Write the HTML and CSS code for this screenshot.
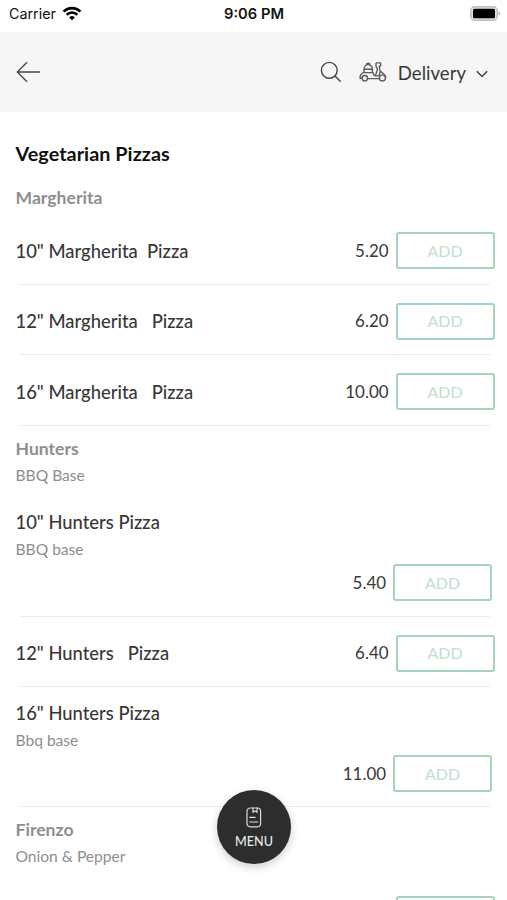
FILE: index.html
```html
<!DOCTYPE html>
<html lang="en">
<head>
<meta charset="utf-8">
<title>Vegetarian Pizzas</title>
<link rel="stylesheet" href="styles.css">
</head>
<body>
<div class="status">
  <div class="carrier"><span>Carrier</span>
    <svg width="20" height="15" viewBox="0 0 20 15" fill="none" stroke="#000" stroke-width="2.7"><path d="M1.6 5.6a12 12 0 0 1 16.8 0M4.7 8.7a7.5 7.5 0 0 1 10.6 0"/><path d="M10 14.2l-2.8-2.8a4 4 0 0 1 5.6 0z" fill="#000" stroke="none"/></svg>
  </div>
  <div class="time">9:06 PM</div>
  <svg class="battery" width="31" height="15" viewBox="0 0 31 15"><rect x=".8" y=".8" width="26.4" height="13.4" rx="4" fill="#e0e0e0" stroke="#bdbdbd" stroke-width="1.4"/><rect x="3" y="2.8" width="22" height="9.4" rx="1.5"/><path d="M28.5 5.2q3 2.3 0 4.6z" fill="#aaa"/></svg>
</div>
<header class="header">
  <svg class="back" width="26" height="22" viewBox="0 0 26 22" fill="none" stroke="#444" stroke-width="1.3"><path d="M25 11H2.5M12 1.2L2.3 11l9.7 9.8"/></svg>
  <svg class="search" width="22" height="22" viewBox="0 0 22 22" fill="none" stroke="#444" stroke-width="1.4"><circle cx="9.3" cy="9.3" r="7.9"/><path d="M15 15l5.7 5.7"/></svg>
  <svg class="scooter" width="28" height="20" viewBox="0 0 28 20" fill="none" stroke="#5c5c5c" stroke-width="1.4" stroke-linejoin="round"><path d="M5 10.4V7.2a4.2 4.6 0 0 1 8.4 0v3.2M7.4 3.2q0-2 1.8-2t1.8 2M5 7.2h8.4M3.8 10.6h10.4M4.4 10.6Q1 12 1 16.2h2.2M13.8 10.6l1.6 3.4M8.6 16.6h11.6M17 .9h4.6v3.2h-1.4l.8 4.6 4.2 3.8q1.8 1.4 1.6 3.4M17 .9v3.4q2 2.4 1 5l-1.8 4.6h3.6l1.6-4.6"/><circle cx="5.8" cy="16.2" r="2.7"/><circle cx="23.4" cy="15.9" r="3"/></svg>
  <span class="mode">Delivery</span>
  <svg class="chevron" width="12" height="8" viewBox="0 0 12 8" fill="none" stroke="#444" stroke-width="1.5"><path d="M.8 1.2L6 6.5l5.2-5.3"/></svg>
</header>
<main class="content">
  <h1 class="title">Vegetarian Pizzas</h1>
  <section>
    <div class="group short"><h2>Margherita</h2></div>
    <div class="row tall-1"><span class="name">10" Margherita&nbsp; Pizza</span><span class="price">5.20</span><button class="add">ADD</button></div>
    <div class="row"><span class="name">12" Margherita&nbsp;&nbsp; Pizza</span><span class="price">6.20</span><button class="add">ADD</button></div>
    <div class="row tall-1"><span class="name">16" Margherita&nbsp;&nbsp; Pizza</span><span class="price">10.00</span><button class="add">ADD</button></div>
  </section>
  <section>
    <div class="group"><h2>Hunters</h2><p>BBQ Base</p></div>
    <div class="detail tall-1"><div class="name">10" Hunters Pizza</div><p>BBQ base</p><div class="buy"><span class="price">5.40</span><button class="add">ADD</button></div></div>
    <div class="row"><span class="name">12" Hunters&nbsp;&nbsp; Pizza</span><span class="price">6.40</span><button class="add">ADD</button></div>
    <div class="detail"><div class="name">16" Hunters Pizza</div><p>Bbq base</p><div class="buy"><span class="price">11.00</span><button class="add">ADD</button></div></div>
  </section>
  <section>
    <div class="group"><h2>Firenzo</h2><p>Onion &amp; Pepper</p></div>
    <div class="row next"><span class="name"></span><span class="add"></span></div>
  </section>
</main>
<button class="menu">
  <svg width="16" height="21" viewBox="0 0 16 21" fill="none" stroke="#ddd" stroke-width="1.2"><rect x="1" y="1" width="13.6" height="18.8" rx="3.2"/><path d="M7 1v4.2l2-1.3 2 1.3V1M3.8 10.3h5.4M3.8 15h8" stroke-linecap="round"/></svg>
  <span>MENU</span>
</button>
</body>
</html>
```
FILE: styles.css
```css
* { box-sizing: border-box; }
body {
  margin: 0;
  height: 900px;
  overflow: hidden;
  position: relative;
  background: #fff;
  color: #383838;
  font-family: Lato, "Liberation Sans", sans-serif;
}
h1, h2, p { margin: 0; }
button { font-family: inherit; }
svg { display: block; flex: none; }
.status {
  height: 32px;
  display: grid;
  grid-template-columns: 1fr auto 1fr;
  align-items: center;
  padding: 0 6px 5px 9px;
  font-family: Inter, "Liberation Sans", sans-serif;
  color: #111;
}
.carrier { display: flex; align-items: center; gap: 6px; font-size: 14.3px; }
.time { font-size: 14.7px; font-weight: 600; margin-right: 2px; }
.battery { justify-self: end; }
.header {
  height: 80px;
  background: #f6f6f6;
  display: flex;
  align-items: center;
  padding: 0 19px 0 15px;
}
.search { margin-left: auto; }
.scooter { margin-left: 17px; }
.mode { margin-left: 11px; font-size: 18.6px; line-height: 24px; padding-top: 1px; }
.chevron { margin: 3px 0 0 10px; }
.title {
  height: 63px;
  padding: 29px 15.5px 0;
  font-size: 19.8px;
  line-height: 24px;
  font-weight: 700;
  letter-spacing: .05px;
  color: #111;
}
.group { height: 70px; padding: 12px 15.5px 0; color: #8e8e8e; }
.group.short { height: 39px; }
.group h2 { font-size: 17.6px; line-height: 22px; font-weight: 700; }
p { font-size: 15.6px; line-height: 20px; color: #8e8e8e; }
.group p { margin-top: 5px; }
.row, .detail { position: relative; }
.row::after, .detail::after {
  content: "";
  position: absolute;
  left: 19px;
  right: 17px;
  bottom: 0;
  height: 1px;
  background: #ececec;
}
.row {
  height: 70px;
  display: flex;
  align-items: center;
  padding: 2px 12.5px 0 15.5px;
}
.row.tall-1 { height: 71px; }
.name { flex: 1; font-size: 18.4px; line-height: 24px; font-weight: 500; }
.price { font-size: 16.9px; line-height: 24px; margin-right: 7px; }
.add {
  width: 99px;
  height: 37px;
  padding: 0 0 1px;
  border: 2px solid #a5d5b9;
  border-radius: 3px;
  background: #fff;
  color: #bfe0cc;
  font-size: 16px;
}
.row.next { height: 23px; align-items: flex-start; padding-top: 19px; overflow: hidden; }
.row.next::after { display: none; }
.detail { height: 120px; padding: 14px 15px 0 15.5px; }
.detail.tall-1 { height: 121px; }
.detail p { margin-top: 5px; }
.buy { display: flex; justify-content: flex-end; align-items: center; margin-top: 5px; }
.menu {
  position: absolute;
  left: 217px;
  top: 790px;
  width: 74px;
  height: 74px;
  border: 0;
  border-radius: 50%;
  background: #2d2d2d;
  box-shadow: 0 3px 8px rgba(0, 0, 0, .2);
  color: #e8e8e8;
  display: flex;
  flex-direction: column;
  align-items: center;
  padding: 17px 0 0;
  font-size: 12.6px;
  line-height: 16px;
  font-weight: 500;
}
.menu span { margin-top: 6px; }
```
